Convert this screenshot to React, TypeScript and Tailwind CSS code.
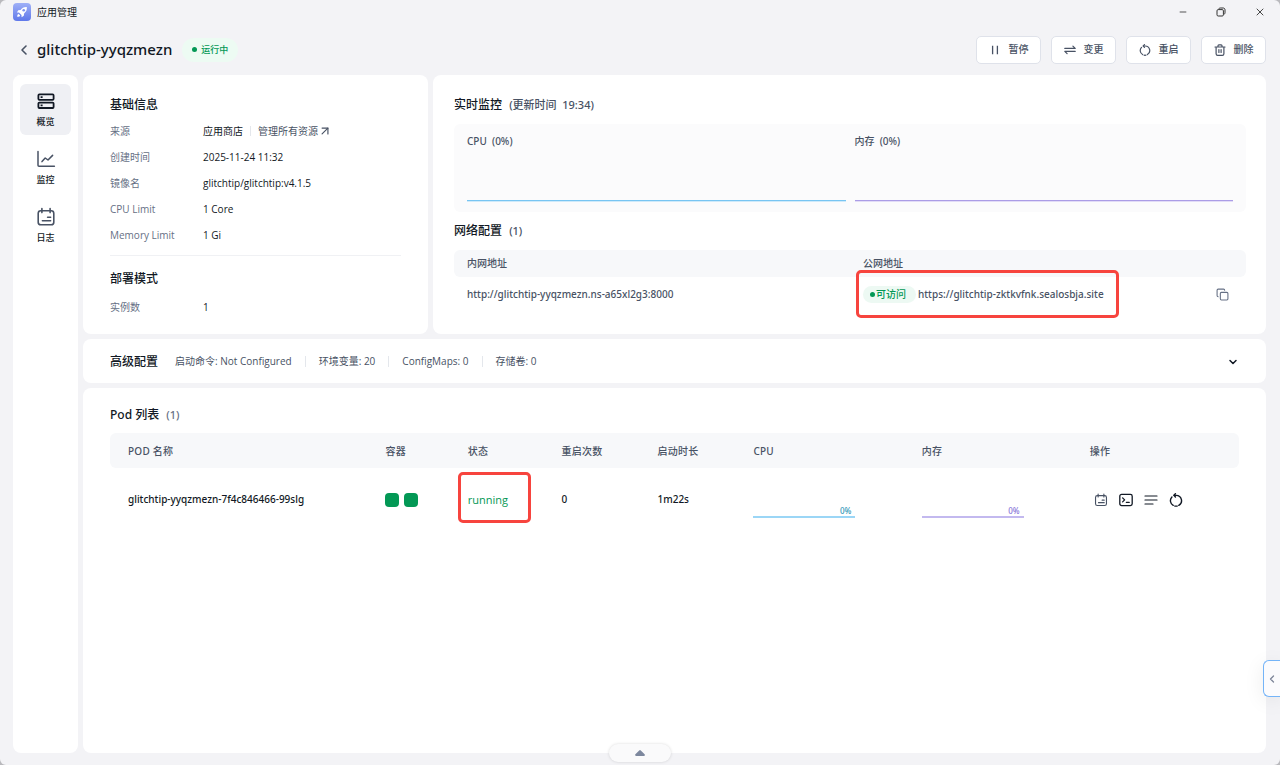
import React from 'react';
import { ArrowUpRight, ChevronDown, ChevronLeft, Copy, Minus, X } from 'lucide-react';

interface IconProps {
    className?: string;
}

const basicInfo = [
    { label: '创建时间', value: '2025-11-24 11:32' },
    { label: '镜像名', value: 'glitchtip/glitchtip:v4.1.5' },
    { label: 'CPU Limit', value: '1 Core' },
    { label: 'Memory Limit', value: '1 Gi' }
];

const advanced = ['启动命令: Not Configured', '环境变量: 20', 'ConfigMaps: 0', '存储卷: 0'];

const podColumns = [
    { title: 'POD 名称', width: 'w-[22.8%]' },
    { title: '容器', width: 'w-[7.3%]' },
    { title: '状态', width: 'w-[8.3%]' },
    { title: '重启次数', width: 'w-[8.5%]' },
    { title: '启动时长', width: 'w-[8.5%]' },
    { title: 'CPU', width: 'w-[14.9%]' },
    { title: '内存', width: 'w-[14.9%]' },
    { title: '操作', width: 'w-[14.8%]' }
];

function LogoIcon({ className }: IconProps) {
    return (
        <svg viewBox="0 0 18 18" className={className} aria-hidden="true">
            <defs>
                <linearGradient id="logo" x1="0" y1="0" x2="0" y2="1">
                    <stop offset="0" stopColor="#9fb0f7" />
                    <stop offset="1" stopColor="#5f78ea" />
                </linearGradient>
            </defs>
            <rect width="18" height="18" rx="4" fill="url(#logo)" />
            <path
                d="M13.8 4.1c-2.7-.2-4.7.7-6.2 2.9l-2.3.3L3.9 9.5l2.1.1 2.5 2.5.1 2.1 2.2-1.4.3-2.3c2.1-1.6 3-3.6 2.7-6.4Z"
                fill="#fff"
            />
            <circle cx="10.7" cy="7.3" r="1.3" fill="#7f93ef" />
            <path d="M5.6 10.9c-1 .2-1.4 1.3-1.4 2.9 1.6 0 2.7-.4 2.9-1.4Z" fill="#fff" />
        </svg>
    );
}

function RestoreIcon({ className }: IconProps) {
    return (
        <svg viewBox="0 0 10 10" className={className} fill="none" stroke="currentColor" aria-hidden="true">
            <rect x="1" y="2.6" width="6.4" height="6.4" rx="1.2" />
            <path d="M2.8 2.4C2.8 1.4 3.4 1 4.2 1h2.9c1.2 0 1.9.7 1.9 1.9v2.9c0 .8-.4 1.4-1.4 1.4" />
        </svg>
    );
}

function PauseIcon({ className }: IconProps) {
    return (
        <svg viewBox="0 0 12 12" className={className} fill="none" stroke="currentColor" strokeWidth="1.3" aria-hidden="true">
            <path d="M3.6 1.8v8.4M8.4 1.8v8.4" />
        </svg>
    );
}

function SwapIcon({ className }: IconProps) {
    return (
        <svg viewBox="0 0 12 12" className={className} fill="none" stroke="currentColor" strokeWidth="1.2" strokeLinecap="round" strokeLinejoin="round" aria-hidden="true">
            <path d="M.8 4.4h10.4L8.9 2.1M11.2 7.4H.8l2.3 2.3" />
        </svg>
    );
}

function RestartIcon({ className }: IconProps) {
    return (
        <svg viewBox="0 0 12 12" className={className} fill="none" stroke="currentColor" strokeWidth="1.2" strokeLinecap="round" strokeLinejoin="round" aria-hidden="true">
            <path d="M4.4 2h1.8a4.6 4.6 0 0 1 2.2 8.6M6.9 11.2a4.7 4.7 0 0 1-1.8 0M3.6 10.6A4.6 4.6 0 0 1 2.5 3.4" />
            <path d="M5.5.6 4.2 2l1.3 1.4" />
        </svg>
    );
}

function TrashIcon({ className }: IconProps) {
    return (
        <svg viewBox="0 0 12 12" className={className} fill="none" stroke="currentColor" strokeWidth="1.2" strokeLinecap="round" strokeLinejoin="round" aria-hidden="true">
            <path d="M1 3h10M4 3V1.7c0-.6.3-.9.9-.9h2.2c.6 0 .9.3.9.9V3M2.1 3v6.7c0 1 .5 1.6 1.6 1.6h4.6c1.1 0 1.6-.6 1.6-1.6V3M4.9 5.6v2.9M7.1 5.6v2.9" />
        </svg>
    );
}

function OverviewIcon({ className }: IconProps) {
    return (
        <svg viewBox="0 0 20 20" className={className} fill="none" stroke="currentColor" strokeWidth="1.8" aria-hidden="true">
            <rect x="2.4" y="3.4" width="15.2" height="5.4" rx="1" />
            <rect x="2.4" y="11.6" width="15.2" height="5.4" rx="1" />
            <path d="M4.6 6.1h2M4.6 14.3h2" />
        </svg>
    );
}

function ChartIcon({ className }: IconProps) {
    return (
        <svg viewBox="0 0 20 20" className={className} fill="none" stroke="currentColor" strokeWidth="1.5" strokeLinecap="round" strokeLinejoin="round" aria-hidden="true">
            <path d="M2 2.4v13.8c0 .6.4 1 1 1h15.4" />
            <path d="m6 12.6 3.2-3.6 2.8 2 4.6-4.6" />
        </svg>
    );
}

function LogIcon({ className }: IconProps) {
    return (
        <svg viewBox="0 0 20 20" className={className} fill="none" stroke="currentColor" strokeWidth="1.6" strokeLinecap="round" strokeLinejoin="round" aria-hidden="true">
            <rect x="2.2" y="3.8" width="15.6" height="14" rx="2.6" />
            <path d="M5.9 1.6v4M14.1 1.6v4M11.6 10.2h3M6.4 13.8h8.2" />
        </svg>
    );
}

function TerminalIcon({ className }: IconProps) {
    return (
        <svg viewBox="0 0 14 14" className={className} fill="none" stroke="currentColor" strokeWidth="1.3" strokeLinecap="round" strokeLinejoin="round" aria-hidden="true">
            <rect x=".8" y="1.4" width="12.4" height="11.2" rx="1.8" />
            <path d="m3.6 4.9 2 2-2 2M7.4 9.4h2.8" />
        </svg>
    );
}

function LinesIcon({ className }: IconProps) {
    return (
        <svg viewBox="0 0 14 14" className={className} fill="none" stroke="currentColor" strokeWidth="1.2" strokeLinecap="round" aria-hidden="true">
            <path d="M1 3h12M1 7h12M1 11h8" />
        </svg>
    );
}

const actions = [
    { label: '暂停', icon: PauseIcon },
    { label: '变更', icon: SwapIcon },
    { label: '重启', icon: RestartIcon },
    { label: '删除', icon: TrashIcon }
];

const navItems = [
    { label: '概览', icon: OverviewIcon, active: true },
    { label: '监控', icon: ChartIcon, active: false },
    { label: '日志', icon: LogIcon, active: false }
];

function TitleBar() {
    return (
        <div className="flex h-6 items-center justify-between pl-[13px] pr-3.5">
            <div className="flex items-center gap-1.5">
                <LogoIcon className="size-[18px]" />
                <span className="text-[10px] text-[#111824]">应用管理</span>
            </div>
            <div className="flex items-center gap-7 text-[#333]">
                <button aria-label="最小化"><Minus className="size-2.5" strokeWidth={2} /></button>
                <button aria-label="还原"><RestoreIcon className="size-2.5" /></button>
                <button aria-label="关闭"><X className="size-3" strokeWidth={1.8} /></button>
            </div>
        </div>
    );
}

function Header() {
    return (
        <header className="flex h-[51px] items-center justify-between pl-4 pr-3.5">
            <div className="flex items-center">
                <button aria-label="返回" className="mr-[5px] text-[#485264]">
                    <ChevronLeft className="size-4" strokeWidth={2.4} />
                </button>
                <h1 className="font-['Noto_Sans',sans-serif] text-[15px] font-medium text-[#111824]">glitchtip-yyqzmezn</h1>
                <span className="ml-2.5 flex h-6 items-center gap-1 rounded-full bg-[#edfbf3] px-2.5 text-[9px] font-medium text-[#039855]">
                    <span className="size-[5px] rounded-full bg-[#039855]" />
                    运行中
                </span>
            </div>
            <div className="flex gap-2.5">
                {actions.map(({ label, icon: Icon }) => (
                    <button
                        key={label}
                        className="flex h-7 w-[65px] items-center justify-center gap-2 rounded-[5px] border border-[#dfe2ea] bg-white font-medium text-[#485264]"
                    >
                        <Icon className="size-3" />
                        {label}
                    </button>
                ))}
            </div>
        </header>
    );
}

function Sidebar() {
    return (
        <nav className="flex w-[65px] shrink-0 flex-col items-center gap-[7px] rounded-lg bg-white pt-[9px]">
            {navItems.map(({ label, icon: Icon, active }) => (
                <a
                    key={label}
                    href="#"
                    className={`flex size-[51px] flex-col items-center justify-center gap-[3px] rounded-md text-[9px] font-medium text-[#111824] ${active ? 'bg-[#eff0f4]' : ''}`}
                >
                    <Icon className={active ? 'size-5 text-[#111824]' : 'size-5 text-[#485264]'} />
                    {label}
                </a>
            ))}
        </nav>
    );
}

function BasicInfo() {
    return (
        <section className="w-[345px] shrink-0 rounded-lg bg-white px-[27px] pb-3.5 pt-[21px]">
            <h2 className="text-xs leading-[18px] font-medium text-[#111824]">基础信息</h2>
            <dl className="mt-1 border-b border-[#f0f1f4] pb-[7px]">
                <div className="flex h-[26px] items-center">
                    <dt className="w-[93px] text-[#667085]">来源</dt>
                    <dd className="flex items-center text-[#111824]">
                        应用商店
                        <span className="mx-[7px] h-2.5 w-px bg-[#e4e7ec]" />
                        <a href="#" className="flex items-center text-[#485264]">
                            管理所有资源
                            <ArrowUpRight className="size-3.5" strokeWidth={2} />
                        </a>
                    </dd>
                </div>
                {basicInfo.map((row) => (
                    <div key={row.label} className="flex h-[26px] items-center">
                        <dt className="w-[93px] text-[#667085]">{row.label}</dt>
                        <dd className="text-[#111824]">{row.value}</dd>
                    </div>
                ))}
            </dl>
            <h2 className="mt-3.5 text-xs leading-[18px] font-medium text-[#111824]">部署模式</h2>
            <dl className="mt-[7px] flex h-[25px] items-center">
                <dt className="w-[93px] text-[#667085]">实例数</dt>
                <dd className="text-[#111824]">1</dd>
            </dl>
        </section>
    );
}

function Monitor() {
    return (
        <section className="min-w-0 flex-1 rounded-lg bg-white pl-[21px] pr-5 pt-[21px]">
            <h2 className="text-xs leading-[18px] font-medium text-[#111824]">
                实时监控 <span className="ml-1 font-['Noto_Sans','Noto_Sans_CJK_SC',sans-serif] text-[11px] text-[#485264]">(更新时间&nbsp; 19:34)</span>
            </h2>
            <div className="mt-2.5 flex h-[88px] gap-[9px] rounded-md bg-[#fbfbfc] px-[13px] pt-2.5 font-['Noto_Sans','Noto_Sans_CJK_SC',sans-serif] font-medium text-[#485264]">
                <div className="h-[67px] flex-1 border-b border-[#78c5f2] shadow-[0_1px_0_#cfeafa]">CPU&nbsp; (0%)</div>
                <div className="h-[67px] flex-1 border-b border-[#ab9de6] shadow-[0_1px_0_#e2dcf7]">内存&nbsp; (0%)</div>
            </div>

            <h2 className="mt-2.5 text-xs leading-[18px] font-medium text-[#111824]">
                网络配置 <span className="ml-1 font-['Noto_Sans',sans-serif] text-[11px] text-[#485264]">(1)</span>
            </h2>
            <table className="mt-2.5 w-full table-fixed text-left font-['Noto_Sans','Noto_Sans_CJK_SC',sans-serif] text-[#485264]">
                <thead>
                    <tr className="h-[27px] bg-[#f7f8fa]">
                        <th className="w-1/2 rounded-l-md px-[13px] font-medium">内网地址</th>
                        <th className="w-1/2 rounded-r-md px-[13px] font-medium">公网地址</th>
                    </tr>
                </thead>
                <tbody>
                    <tr className="h-[35px] font-medium">
                        <td className="px-[13px]">http://glitchtip-yyqzmezn.ns-a65xl2g3:8000</td>
                        <td className="px-[13px]">
                            <div className="flex items-center justify-between pr-1">
                                <div className="relative flex items-center gap-0.5">
                                    <span className="flex h-[17px] items-center gap-px rounded-full bg-[#edf9f3] px-[7px] pr-2.5 text-[#039855]">
                                        <span className="size-[5px] rounded-full bg-[#039855]" />
                                        可访问
                                    </span>
                                    <a href="#">https://glitchtip-zktkvfnk.sealosbja.site</a>
                                    <span className="pointer-events-none absolute -left-[7px] -top-4 h-12 w-[263px] rounded-[5px] border-[3px] border-[#f7443e]" />
                                </div>
                                <button aria-label="复制" className="text-[#667085]">
                                    <Copy className="size-[13px]" strokeWidth={2} />
                                </button>
                            </div>
                        </td>
                    </tr>
                </tbody>
            </table>
        </section>
    );
}

function AdvancedConfig() {
    return (
        <section className="flex h-11 items-center rounded-lg bg-white px-[27px] pt-px">
            <h2 className="mr-[17px] text-xs font-medium text-[#111824]">高级配置</h2>
            <ul className="flex divide-x divide-[#e4e7ec] text-[#485264]">
                {advanced.map((item) => (
                    <li key={item} className="px-[13px] leading-[11px] first:pl-0">{item}</li>
                ))}
            </ul>
            <button aria-label="展开" className="ml-auto text-[#111824]">
                <ChevronDown className="size-3" strokeWidth={3} />
            </button>
        </section>
    );
}

function PodList() {
    return (
        <section className="flex-1 rounded-lg bg-white px-[27px] pt-[18px]">
            <h2 className="font-['Noto_Sans','Noto_Sans_CJK_SC',sans-serif] text-xs leading-[18px] font-medium text-[#111824]">
                Pod 列表 <span className="ml-1 text-[11px] text-[#667085]">(1)</span>
            </h2>
            <table className="mt-[9px] w-full table-fixed text-left font-['Noto_Sans','Noto_Sans_CJK_SC',sans-serif]">
                <thead>
                    <tr className="h-[35px] bg-[#f7f8fa] tracking-wide text-[#485264]">
                        {podColumns.map((col) => (
                            <th key={col.title} className={`pl-[18px] pt-0.5 font-medium first:rounded-l-md last:rounded-r-md ${col.width}`}>
                                {col.title}
                            </th>
                        ))}
                    </tr>
                </thead>
                <tbody>
                    <tr className="h-[63px] font-medium text-[#111824]">
                        <td className="pl-[18px]">glitchtip-yyqzmezn-7f4c846466-99slg</td>
                        <td className="pl-[18px]">
                            <div className="flex gap-[5px]">
                                <span className="size-3.5 rounded-[4px] bg-[#039855]" />
                                <span className="size-3.5 rounded-[4px] bg-[#039855]" />
                            </div>
                        </td>
                        <td className="pl-[18px] font-['Open_Sans',sans-serif] text-[11px] font-normal text-[#039855]">
                            <span className="relative">
                                running
                                <span className="pointer-events-none absolute -left-2.5 -top-5 h-[51px] w-[73px] rounded-[5px] border-[3px] border-[#f7443e]" />
                            </span>
                        </td>
                        <td className="pl-[18px]">0</td>
                        <td className="pl-[18px]">1m22s</td>
                        <td className="pl-[18px]">
                            <div className="flex h-9 w-[102px] items-end justify-end border-b-2 border-[#9bd6f6] pr-1 text-[8px] leading-[10px] text-[#3297b8]">0%</div>
                        </td>
                        <td className="pl-[18px]">
                            <div className="flex h-9 w-[102px] items-end justify-end border-b-2 border-[#c3b9ef] pr-1 text-[8px] leading-[10px] text-[#8774d8]">0%</div>
                        </td>
                        <td className="pl-[22px]">
                            <div className="flex gap-[11px] text-[#111824]">
                                <button aria-label="日志" className="text-[#485264]"><LogIcon className="size-3.5" /></button>
                                <button aria-label="终端"><TerminalIcon className="size-3.5" /></button>
                                <button aria-label="详情"><LinesIcon className="size-3.5" /></button>
                                <button aria-label="重启"><RestartIcon className="size-3.5" /></button>
                            </div>
                        </td>
                    </tr>
                </tbody>
            </table>
        </section>
    );
}

export default function App() {
    return (
        <div className="bg-[#b9b9bd] font-['Open_Sans','Noto_Sans_CJK_SC',sans-serif] text-[10px] leading-[15px]">
            <div className="relative flex min-h-screen flex-col overflow-hidden rounded-md bg-[#f3f3f6]">
                <TitleBar />
                <Header />
                <main className="flex flex-1 gap-[5px] pb-3 pl-[13px] pr-3.5">
                    <Sidebar />
                    <div className="flex min-w-0 flex-1 flex-col gap-[5px]">
                        <div className="flex gap-[5px]">
                            <BasicInfo />
                            <Monitor />
                        </div>
                        <AdvancedConfig />
                        <PodList />
                    </div>
                </main>

                {/* Floating handles */}
                <button
                    aria-label="展开侧栏"
                    className="absolute bottom-[68px] right-0 flex h-[37px] w-[17px] items-center justify-center rounded-l-md border border-r-0 border-[#74b4f8] bg-[#fbfbfd] text-[#7b8498] shadow-[0_4px_20px_rgba(0,0,0,0.08)]"
                >
                    <ChevronLeft className="size-3" strokeWidth={2.5} />
                </button>
                <button
                    aria-label="显示程序坞"
                    className="absolute bottom-[3px] left-1/2 flex h-[18px] w-[62px] -translate-x-1/2 items-center justify-center rounded-full bg-[#fafafb] text-[#7d889e] shadow-[0_0_3px_rgba(0,0,0,0.15)]"
                >
                    <svg viewBox="0 0 10 6" className="h-1.5 w-2.5" fill="currentColor" aria-hidden="true">
                        <path d="M4.2.4a1.2 1.2 0 0 1 1.6 0l3.8 3.9c.7.7.3 1.7-.7 1.7H1.1C.1 6-.3 5 .4 4.3Z" />
                    </svg>
                </button>
            </div>
        </div>
    );
}
